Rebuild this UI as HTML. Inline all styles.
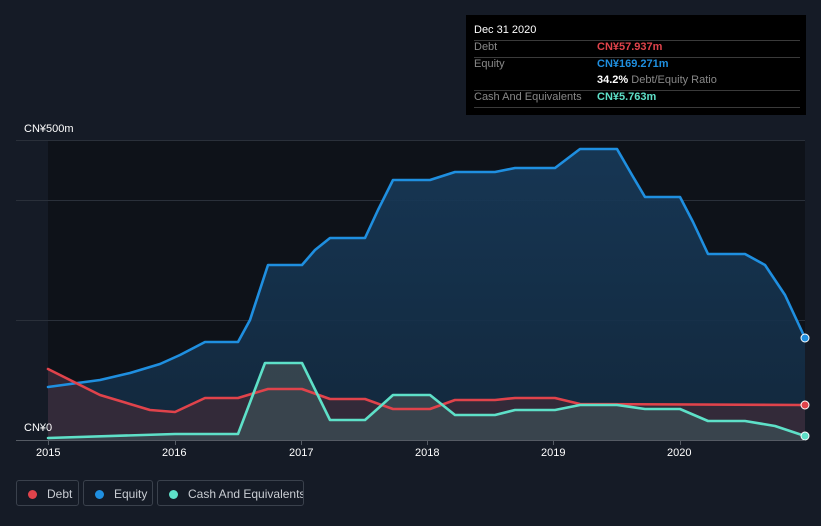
<!DOCTYPE html>
<html><head><meta charset="utf-8"><style>
body{margin:0;background:#151b26;width:821px;height:526px;overflow:hidden;font-family:"Liberation Sans",sans-serif;position:relative}
.tt{position:absolute;left:466px;top:15px;width:340px;height:100px;background:#000;color:#fff;font-size:11px}
.tt .r{position:absolute;left:8px;right:6px;border-top:1px solid #3a3a3a}
.lbl{position:absolute;color:#888}
.leg{position:absolute;top:480px;height:26px;border:1px solid #3a414c;border-radius:3px;color:#c8ccd2;font-size:12px;line-height:26px;box-sizing:border-box;white-space:nowrap;overflow:hidden}
.leg i{display:inline-block;width:9px;height:9px;border-radius:50%;margin:0 10px 0 11px;vertical-align:-1px}
.ax{position:absolute;color:#fff;font-size:11px}
</style></head><body>
<svg width="821" height="526" style="position:absolute;left:0;top:0">
<defs><linearGradient id="eq" x1="0" y1="0" x2="0" y2="1"><stop offset="0" stop-color="#173a5a" stop-opacity=".9"/><stop offset="1" stop-color="#132a40" stop-opacity=".9"/></linearGradient></defs>
<rect x="48" y="140" width="757" height="300" fill="#0e1219"/>
<g stroke="#2a303a" stroke-width="1"><line x1="16" y1="140.5" x2="805" y2="140.5"/><line x1="16" y1="200.5" x2="805" y2="200.5"/><line x1="16" y1="320.5" x2="805" y2="320.5"/></g>
<path d="M48,387 L100,380 L130,373 L160,364 L180,355 L205,342 L238,342 L250,320 L268,265 L302,265 L315,250 L330,238 L365,238 L378,210 L393,180 L430,180 L455,172 L495,172 L515,168 L555,168 L580,149 L617,149 L632,175 L645,197 L680,197 L693,222 L708,254 L745,254 L765,265 L785,295 L805,338 L805,440 L48,440Z" fill="url(#eq)"/>
<path d="M48,369 L100,395 L150,410 L175,412 L205,398 L238,398 L268,389 L302,389 L330,399 L365,399 L393,409 L430,409 L455,400 L495,400 L515,398 L555,398 L580,404 L805,405 L805,440 L48,440Z" fill="#3a2a38" opacity=".85"/>
<path d="M48,438 L175,434 L238,434 L265,363 L302,363 L330,420 L365,420 L393,395 L430,395 L455,415 L495,415 L515,410 L555,410 L580,405 L617,405 L645,409 L680,409 L708,421 L745,421 L775,426 L805,436 L805,440 L48,440Z" fill="#3a4750" opacity=".9"/>
<g fill="none" stroke-width="2.6" stroke-linejoin="round" stroke-linecap="round">
<path d="M48,387 L100,380 L130,373 L160,364 L180,355 L205,342 L238,342 L250,320 L268,265 L302,265 L315,250 L330,238 L365,238 L378,210 L393,180 L430,180 L455,172 L495,172 L515,168 L555,168 L580,149 L617,149 L632,175 L645,197 L680,197 L693,222 L708,254 L745,254 L765,265 L785,295 L805,338" stroke="#1f8fe0"/>
<path d="M48,369 L100,395 L150,410 L175,412 L205,398 L238,398 L268,389 L302,389 L330,399 L365,399 L393,409 L430,409 L455,400 L495,400 L515,398 L555,398 L580,404 L805,405" stroke="#e0434b"/>
<path d="M48,438 L175,434 L238,434 L265,363 L302,363 L330,420 L365,420 L393,395 L430,395 L455,415 L495,415 L515,410 L555,410 L580,405 L617,405 L645,409 L680,409 L708,421 L745,421 L775,426 L805,436" stroke="#5ee0c8"/>
</g>
<circle cx="805" cy="338" r="4" fill="#1f8fe0" stroke="#fff" stroke-width="1"/>
<circle cx="805" cy="405" r="4" fill="#e0434b" stroke="#fff" stroke-width="1"/>
<circle cx="805" cy="436" r="4" fill="#5ee0c8" stroke="#fff" stroke-width="1"/>
<line x1="16" y1="440.5" x2="805" y2="440.5" stroke="#555b64"/>
<g stroke="#555b64"><line x1="48.5" y1="440" x2="48.5" y2="445"/><line x1="175.5" y1="440" x2="175.5" y2="445"/><line x1="301.5" y1="440" x2="301.5" y2="445"/><line x1="427.5" y1="440" x2="427.5" y2="445"/><line x1="553.5" y1="440" x2="553.5" y2="445"/><line x1="680.5" y1="440" x2="680.5" y2="445"/></g>
</svg>
<div class="ax" style="left:24px;top:123px">CN¥500m</div>
<div class="ax" style="left:24px;top:422px">CN¥0</div>
<div class="ax" style="left:36px;top:447px">2015</div>
<div class="ax" style="left:162px;top:447px">2016</div>
<div class="ax" style="left:289px;top:447px">2017</div>
<div class="ax" style="left:415px;top:447px">2018</div>
<div class="ax" style="left:541px;top:447px">2019</div>
<div class="ax" style="left:667px;top:447px">2020</div>
<div class="tt">
<div style="position:absolute;left:8px;top:9px">Dec 31 2020</div>
<div class="r" style="top:25px"></div>
<div class="lbl" style="left:8px;top:26px">Debt</div><div style="position:absolute;left:131px;top:26px;color:#e0434b;font-weight:bold">CN¥57.937m</div>
<div class="r" style="top:42px"></div>
<div class="lbl" style="left:8px;top:43px">Equity</div><div style="position:absolute;left:131px;top:43px;color:#1f8fe0;font-weight:bold">CN¥169.271m</div>
<div style="position:absolute;left:131px;top:59px"><b>34.2%</b> <span style="color:#888">Debt/Equity Ratio</span></div>
<div class="r" style="top:75px"></div>
<div class="lbl" style="left:8px;top:76px">Cash And Equivalents</div><div style="position:absolute;left:131px;top:76px;color:#5ee0c8;font-weight:bold">CN¥5.763m</div>
<div class="r" style="top:92px"></div>
</div>
<div class="leg" style="left:16px;width:63px"><i style="background:#e0434b"></i>Debt</div>
<div class="leg" style="left:83px;width:70px"><i style="background:#1f8fe0"></i>Equity</div>
<div class="leg" style="left:157px;width:147px"><i style="background:#5ee0c8"></i>Cash And Equivalents</div>
</body></html>
